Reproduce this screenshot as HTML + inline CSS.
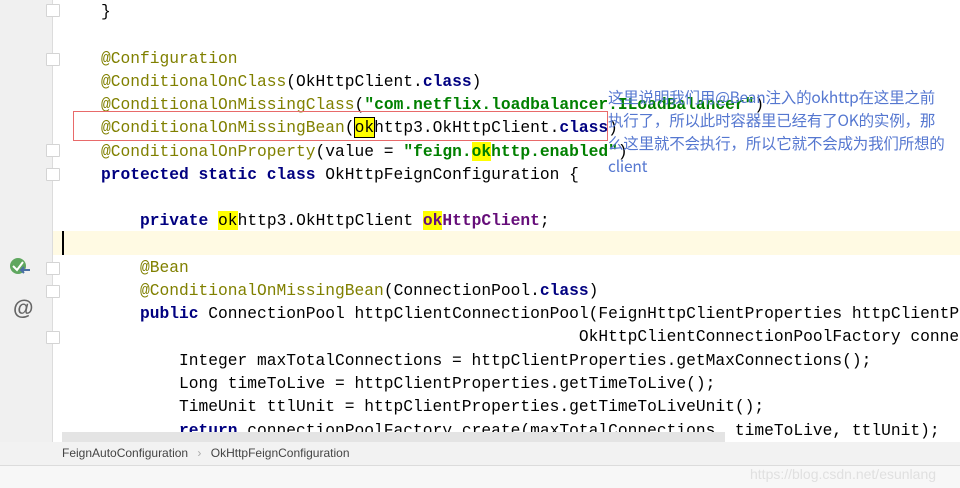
<!DOCTYPE html>
<html><head><meta charset="utf-8"><style>
body{margin:0;width:960px;height:488px;overflow:hidden;background:#fff;position:relative;font-family:"Liberation Mono","Noto Sans CJK SC",monospace}
.wrap{position:absolute;left:0;top:0;width:960px;height:488px;overflow:hidden}
.g{position:absolute;left:0;top:0;width:52px;height:442px;background:#f0f0f0}
.sep{position:absolute;left:52px;top:0;width:1px;height:442px;background:#dcdcdc}
.l{position:absolute;left:101px;font-size:16.25px;line-height:23px;height:23px;white-space:pre;color:#000}
.a{color:#808000}.k{color:#000080;font-weight:bold}.s{color:#008000;font-weight:bold}.f{color:#660e7a;font-weight:bold}
.h{background:#ffff00}
.cur{position:absolute;left:53px;top:231px;width:907px;height:24px;background:#fffae3}
.caret{position:absolute;left:62px;top:231px;width:2px;height:24px;background:#000}
.ann{position:absolute;left:608px;top:86px;font-family:"Noto Sans CJK SC",sans-serif;font-size:15.5px;line-height:23px;color:#5577d0;white-space:nowrap;letter-spacing:-0.2px}
.fold{position:absolute;left:46px;width:12px;height:11px;border:1px solid #d4d4d4;background:#fff;border-radius:1px}
</style></head><body><div class="wrap">
<div class="g"></div><div class="sep"></div>
<div class="cur"></div><div class="caret"></div>
<div class="fold" style="top:4px"></div>
<div class="fold" style="top:53px"></div>
<div class="fold" style="top:144px"></div>
<div class="fold" style="top:168px"></div>
<div class="fold" style="top:262px"></div>
<div class="fold" style="top:285px"></div>
<div class="fold" style="top:331px"></div>
<div class="l" style="top:0">}</div>
<div class="l a" style="top:47px">@Configuration</div>
<div class="l" style="top:70px"><span class="a">@ConditionalOnClass</span>(OkHttpClient.<span class="k">class</span>)</div>
<div class="l" style="top:93px"><span class="a">@ConditionalOnMissingClass</span>(<span class="s">"com.netflix.loadbalancer.ILoadBalancer"</span>)</div>
<div class="l" style="top:116px"><span class="a">@ConditionalOnMissingBean</span>(<span class="h" style="outline:1px solid #000">ok</span>http3.OkHttpClient.<span class="k">class</span>)</div>
<div class="l" style="top:140px"><span class="a">@ConditionalOnProperty</span>(value = <span class="s">"feign.<span class="h">ok</span>http.enabled"</span>)</div>
<div class="l" style="top:163px"><span class="k">protected static class</span> OkHttpFeignConfiguration {</div>
<div class="l" style="top:209px">    <span class="k">private</span> <span class="h">ok</span>http3.OkHttpClient <span class="f"><span class="h">ok</span>HttpClient</span>;</div>
<div class="l a" style="top:256px">    @Bean</div>
<div class="l" style="top:279px">    <span class="a">@ConditionalOnMissingBean</span>(ConnectionPool.<span class="k">class</span>)</div>
<div class="l" style="top:302px">    <span class="k">public</span> ConnectionPool httpClientConnectionPool(FeignHttpClientProperties httpClientProp</div>
<div class="l" style="top:325px">                                                 OkHttpClientConnectionPoolFactory conne</div>
<div class="l" style="top:349px">        Integer maxTotalConnections = httpClientProperties.getMaxConnections();</div>
<div class="l" style="top:372px">        Long timeToLive = httpClientProperties.getTimeToLive();</div>
<div class="l" style="top:395px">        TimeUnit ttlUnit = httpClientProperties.getTimeToLiveUnit();</div>
<div class="l" style="top:419px">        <span class="k">return</span> connectionPoolFactory.create(maxTotalConnections, timeToLive, ttlUnit);</div>
<div style="position:absolute;left:73px;top:111px;width:535px;height:30px;border:1px solid #e86a6a;box-sizing:border-box"></div>
<div class="ann">这里说明我们用@Bean注入的okhttp在这里之前<br>执行了，所以此时容器里已经有了OK的实例，那<br>么这里就不会执行，所以它就不会成为我们所想的<br>client</div>
<svg style="position:absolute;left:8px;top:256px" width="24" height="22"><circle cx="10" cy="10" r="8" fill="#5fa75f"/><path d="M5 10l4 4 6-8" stroke="#fff" stroke-width="2" fill="none"/><path d="M22 14h-9M16 11l-3 3 3 3" stroke="#4a6fa5" stroke-width="2" fill="none"/></svg>
<div style="position:absolute;left:13px;top:297px;font-family:'Liberation Sans',sans-serif;font-size:21px;color:#666;font-weight:bold">@</div>
<div style="position:absolute;left:62px;top:432px;width:663px;height:10px;background:#e4e4e4"></div>
<div style="position:absolute;left:0;top:442px;width:960px;height:23px;background:#f2f2f2;border-bottom:1px solid #dcdcdc"></div>
<div style="position:absolute;left:62px;top:446px;font-family:'Liberation Sans',sans-serif;font-size:12px;color:#444">FeignAutoConfiguration <span style="color:#aaa;margin:0 6px">›</span> OkHttpFeignConfiguration</div>
<div style="position:absolute;left:0;top:466px;width:960px;height:22px;background:#f7f7f7"></div>
<div style="position:absolute;left:750px;top:466px;font-family:'Liberation Sans',sans-serif;font-size:14px;color:#e0e0e0">https://blog.csdn.net/esunlang</div>
</div></body></html>
